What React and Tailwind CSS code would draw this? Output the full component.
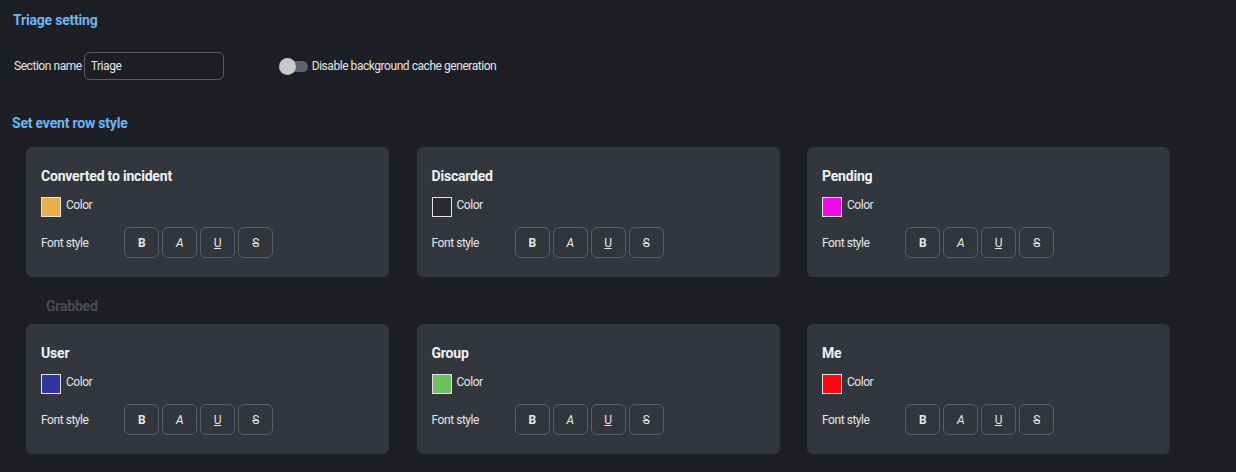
const rows = [
  [
    { name: "Converted to incident", color: "#e8b04c" },
    { name: "Discarded", color: "#2b2b2d" },
    { name: "Pending", color: "#ec0ce9" },
  ],
  [
    { name: "User", color: "#2e35a0" },
    { name: "Group", color: "#6cc063" },
    { name: "Me", color: "#ff0410" },
  ],
];

function StyleButton({ children, className }) {
  return (
    <button className="flex h-[31px] w-[35px] items-center justify-center rounded-[6px] border border-[#5b5f67] text-[12px] text-[#e6e7ea]">
      <span className={className}>{children}</span>
    </button>
  );
}

function EventCard({ name, color }) {
  return (
    <div className="flex h-[130px] flex-col rounded-[6px] bg-[#33363d] px-[15px] pt-[21px]">
      <div className="text-[14px] font-bold leading-[16px] tracking-[-0.2px] text-[#f1f2f4]">{name}</div>
      <div className="mt-[13px] flex items-start gap-[5px]">
        <span className="h-[20px] w-[20px] border border-[#e4e4e4]" style={{ backgroundColor: color }} />
        <span className="mt-[1px] text-[12px] leading-[14px] text-[#e4e5e8]">Color</span>
      </div>
      <div className="mt-[10px] flex items-center">
        <span className="w-[83px] text-[12px] text-[#e4e5e8]">Font style</span>
        <div className="flex gap-[3px]">
          <StyleButton className="font-bold">B</StyleButton>
          <StyleButton className="italic">A</StyleButton>
          <StyleButton className="underline">U</StyleButton>
          <StyleButton className="line-through">S</StyleButton>
        </div>
      </div>
    </div>
  );
}

export default function App() {
  return (
    <div className="h-[472px] w-[1236px] overflow-hidden bg-[#1d1f24] pl-[12px] pt-[12px] font-['Roboto',sans-serif] tracking-[-0.45px]">
      <h2 className="pl-[1px] text-[14px] font-bold leading-[16px] tracking-[-0.2px] text-[#6cb6f0]">Triage setting</h2>

      <div className="mt-[24px] flex items-center">
        <label className="pl-[2px] text-[12px] text-[#e4e5e8]">Section name</label>
        <input
          defaultValue="Triage"
          className="ml-[2px] h-[28px] w-[140px] rounded-[6px] border border-[#585c64] bg-transparent px-[6px] text-[12px] text-[#e4e5e8] outline-none"
        />
        <div className="ml-[55px] flex items-center">
          <div className="relative h-[17px] w-[29px]">
            <span className="absolute right-0 top-[3px] h-[11px] w-[25px] rounded-full bg-[#5d6270]" />
            <span className="absolute left-0 top-0 h-[17px] w-[17px] rounded-full bg-[#c9c9c9]" />
          </div>
          <span className="ml-[4px] text-[12px] text-[#e4e5e8]">Disable background cache generation</span>
        </div>
      </div>

      <h2 className="mt-[35px] text-[14px] font-bold leading-[16px] tracking-[-0.2px] text-[#6cb6f0]">Set event row style</h2>

      <div className="mt-[16px] pl-[14px]">
        <div className="grid grid-cols-[363px_363px_363px] gap-x-[27.5px]">
          {rows[0].map((r) => (
            <EventCard key={r.name} {...r} />
          ))}
        </div>
        <div className="pl-[20px] pt-[21px] pb-[10px] text-[14px] font-semibold leading-[16px] tracking-[-0.2px] text-[#4b4e54]">Grabbed</div>
        <div className="grid grid-cols-[363px_363px_363px] gap-x-[27.5px]">
          {rows[1].map((r) => (
            <EventCard key={r.name} {...r} />
          ))}
        </div>
      </div>
    </div>
  );
}
